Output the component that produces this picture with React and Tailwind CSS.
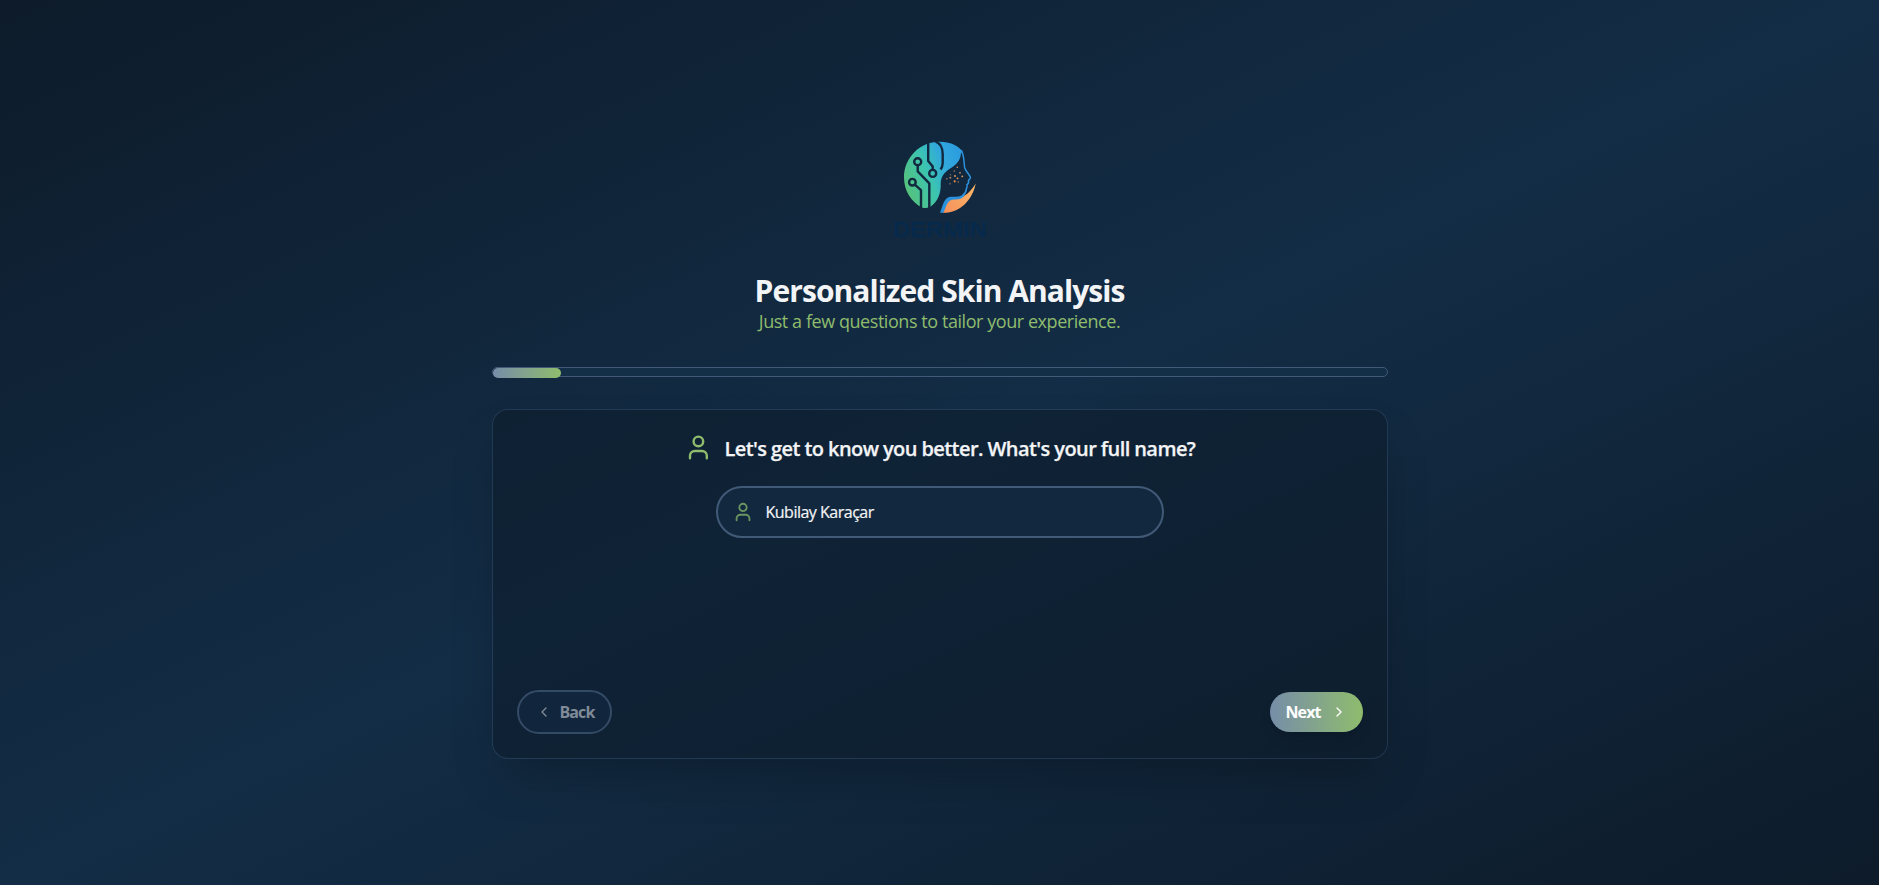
import React from "react";
import { User, ChevronLeft, ChevronRight } from "lucide-react";

const freckles = [
  [77.3, 37.2, 0.8, "#d99463"], [74.3, 41, 0.8, "#a9785c"], [80, 42.8, 0.9, "#c98a60"],
  [70.5, 44.7, 0.7, "#8a6a5a"], [70.3, 47.7, 1, "#b57f5d"], [75, 46, 0.9, "#f0a060"],
  [77.5, 48.3, 0.9, "#e89a60"], [82.3, 46.3, 0.9, "#f0a060"], [66.8, 48.8, 1, "#6f5f5a"],
  [74.7, 51.3, 1.1, "#f28c4a"], [78.3, 52, 0.7, "#b57f5d"], [70, 53.7, 0.9, "#6f5f5a"],
];

function Logo() {
  return (
    <svg viewBox="0 0 120 120" className="h-[120px] w-[120px]" role="img" aria-label="Dermin">
      <defs>
        <linearGradient id="brain" x1="26" y1="60" x2="84" y2="36" gradientUnits="userSpaceOnUse">
          <stop offset="0" stopColor="#55c27c" />
          <stop offset="0.42" stopColor="#3cc4b0" />
          <stop offset="0.72" stopColor="#31a9dc" />
          <stop offset="1" stopColor="#2c9ddf" />
        </linearGradient>
        <linearGradient id="neck" x1="62" y1="82" x2="95" y2="55" gradientUnits="userSpaceOnUse">
          <stop offset="0" stopColor="#f58f5c" />
          <stop offset="1" stopColor="#fbb768" />
        </linearGradient>
      </defs>
      <path
        d="M42 77.500C31 72 24 60.500 24 47.500C24 27.500 40 11.700 59.500 11.700C70 11.700 79 15.500 82.600 22L81 23C80.500 30 77 34 72.500 37C66 41 61 45 60.700 53C61 63 58.500 71 50 77C47 78.200 44.500 78.400 42 77.500Z"
        fill="url(#brain)"
      />
      <path
        d="M81.300 20.500C84.300 25 83.800 33 84.700 37.700C86 42 90.500 45.500 90.400 47.800C90 49.500 88.200 49.800 88.400 51C89.200 53 88.400 53.800 86.800 54.800C87.800 57 86.600 57.500 86.300 59C86.300 62 85 63.500 82.500 65.500"
        fill="none" stroke="#2c91db" strokeWidth="1.500" strokeLinecap="round" strokeLinejoin="round"
      />
      <path d="M95.700 53.500C92.500 70 80 83.500 62.500 82.800C65.500 76 66.500 70 72 69C79 68.500 86 68.500 95.700 53.500Z" fill="url(#neck)" />
      <path d="M60 82.700C63 76 63.500 67.500 71 66.800C76 66.400 80 68 86 62.500C83 70.500 77 69.300 72.500 69.700C67 70.500 66.500 76.500 63.300 82.700Z" fill="#2c91db" />
      <g fill="none" stroke="#12283f" strokeWidth="2.400" strokeLinejoin="round">
        <circle cx="37.700" cy="31.700" r="3.500" />
        <circle cx="52.700" cy="43.400" r="3.500" />
        <circle cx="32.400" cy="52.200" r="3.300" />
        <path d="M37.700 35.200V41.300L49.300 53.300V79" />
        <path d="M48.200 11V31L52.700 36.500V40" />
        <path d="M55.500 11.500C60.500 13.500 62.700 18 62.700 24V33C62.700 36 62 37.500 60.600 39.500" />
        <path d="M34.800 54.700L41 60.200V80" />
      </g>
      {freckles.map(([x, y, r, fill]) => (
        <circle key={`${x}-${y}`} cx={x} cy={y} r={r} fill={fill} />
      ))}
      <text
        x="60" y="107.300" textAnchor="middle" textLength="94" lengthAdjust="spacingAndGlyphs"
        className="font-['Liberation_Sans'] text-[22px] font-bold" fill="#07294b"
      >
        DERMIN
      </text>
    </svg>
  );
}

export default function App() {
  return (
    <div className="flex h-[885px] flex-col items-center bg-[linear-gradient(to_bottom_right,#0d1b2a,#132d46,#0d1b2a)] pt-[130px] font-['Open_Sans','Noto_Sans',sans-serif]">
      <main className="flex w-[896px] flex-col">
        <header className="flex flex-col items-center">
          <Logo />
          <h1 className="mt-[22px] flex h-9 w-[370px] items-center justify-center whitespace-nowrap text-[30px] font-bold tracking-[-0.95px] text-gray-100">
            Personalized Skin Analysis
          </h1>
          <p className="-mt-px flex h-7 items-center whitespace-nowrap text-[18px] tracking-[-0.44px] text-[#8fbc6d]">
            Just a few questions to tailor your experience.
          </p>
        </header>

        <div className="mt-8 h-2.5 rounded-full border border-[#415a77] bg-[#132e47]">
          <div className="h-2.5 w-[68px] rounded-full bg-[linear-gradient(to_right,#778da9,#8fbc6d)]" />
        </div>

        <section className="mt-8 flex h-[350px] flex-col rounded-2xl border border-[#415a77]/35 bg-[#0d1b2a]/55 bg-clip-padding p-6 shadow-[0_25px_50px_-12px_rgba(0,0,0,0.25)]">
          <div className="flex h-7 items-center justify-center gap-3">
            <User className="h-[28.8px] w-[28.8px] -translate-y-px text-[#8fbc6d]" />
            <h2 className="mt-0.5 whitespace-nowrap text-[20px] font-semibold tracking-[-0.58px] text-gray-100 [-webkit-text-stroke:0.25px]">
              Let's get to know you better. What's your full name?
            </h2>
          </div>
          <div className="mx-auto mt-6 flex h-[52px] w-[448px] items-center gap-3 rounded-full border-2 border-[#415a77] bg-[#12283f] px-3.5">
            <User className="h-[22px] w-[22px] text-[#6a9560]" />
            <span className="text-[16px] tracking-[-0.5px] text-gray-100 [-webkit-text-stroke:0.2px]">Kubilay Karaçar</span>
          </div>
          <div className="mt-auto flex items-center justify-between">
            <button className="flex h-11 w-[95px] items-center rounded-full border-2 border-[#344b66] bg-[#11263d] pl-[17px] text-[16px] font-bold tracking-[-0.9px] text-[#808b98]">
              <ChevronLeft className="mr-2 h-4 w-4" />
              Back
            </button>
            <button className="flex h-10 w-[93px] items-center rounded-full bg-[linear-gradient(to_right,#778da9,#8fbc6d)] pl-4 text-[16px] font-bold tracking-[-0.9px] text-white shadow-lg">
              Next
              <ChevronRight className="ml-2.5 h-4 w-4" />
            </button>
          </div>
        </section>
      </main>
    </div>
  );
}
